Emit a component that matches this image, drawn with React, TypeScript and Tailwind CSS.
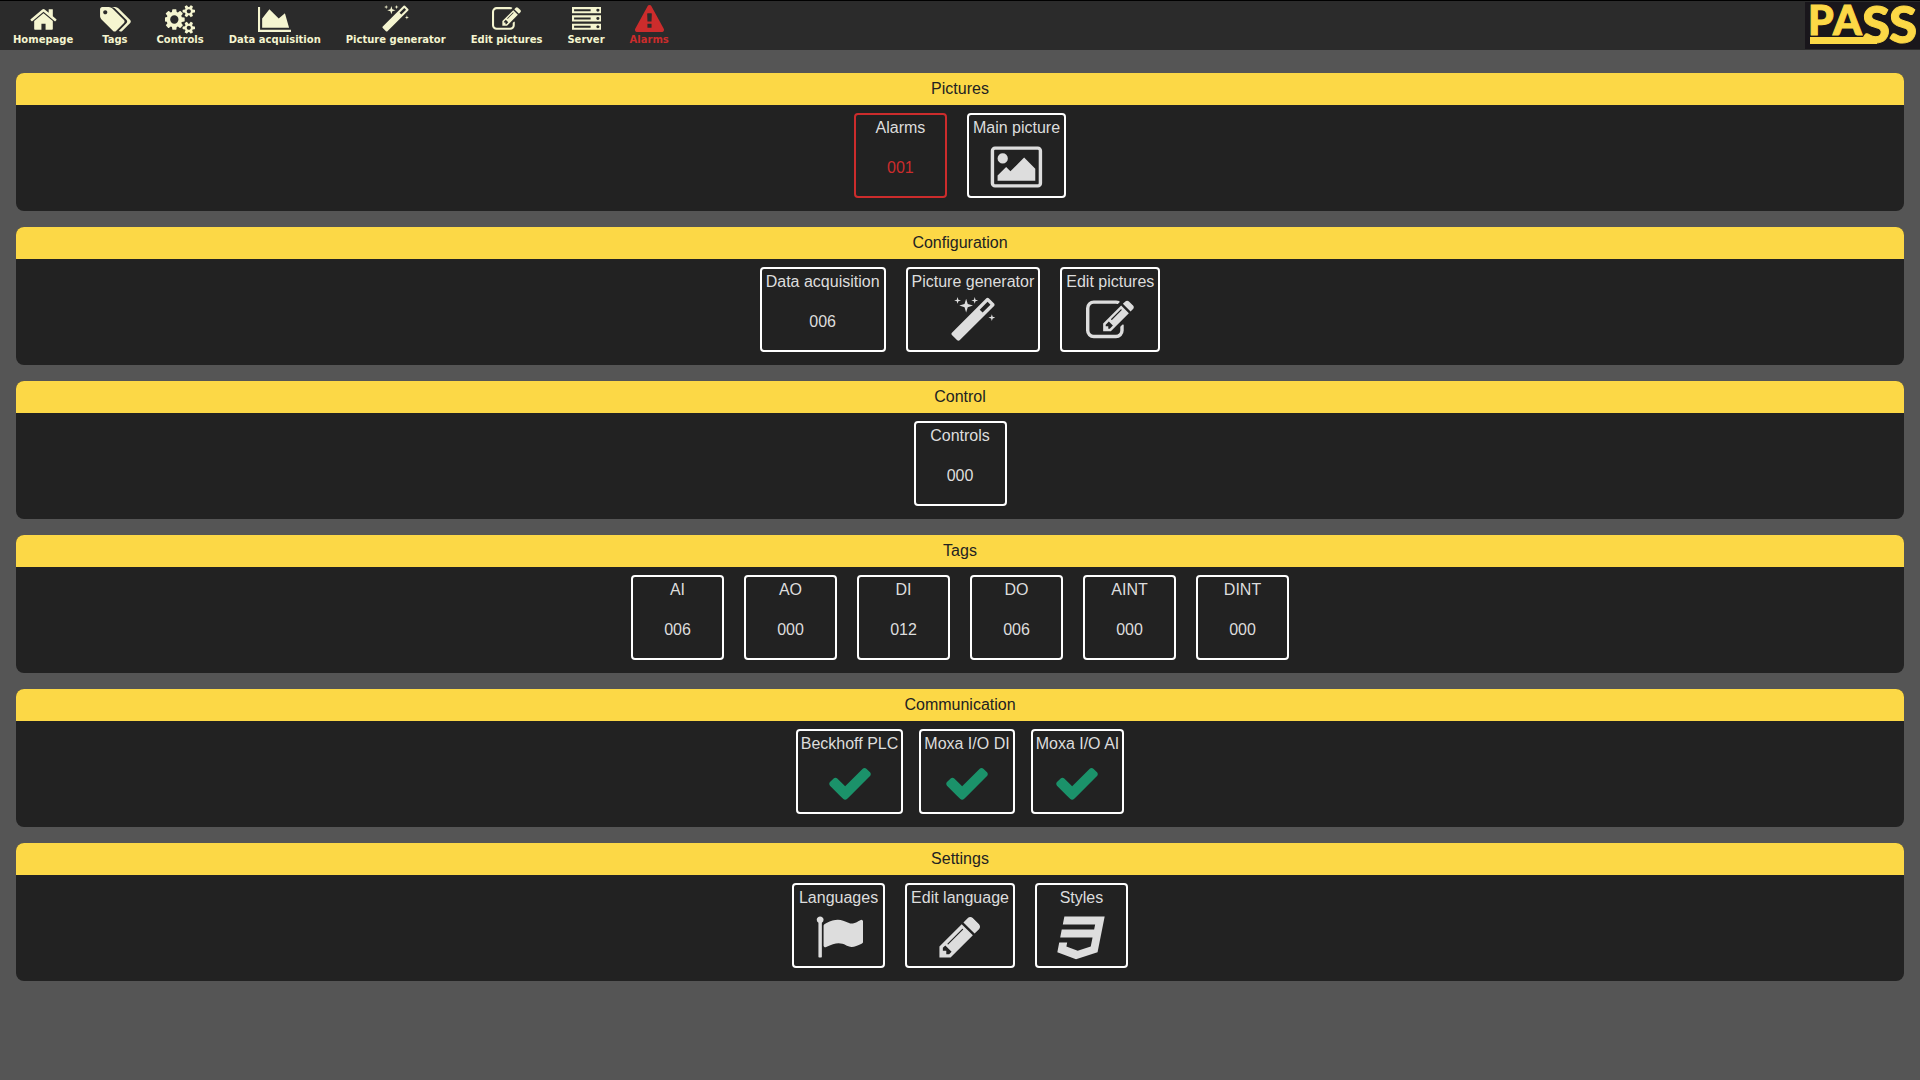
type Glyph = { width: number; d: string }

const glyphs: Record<string, Glyph> = {
  home: {
    width: 1792,
    d: 'M1472 992v480q0 26-19 45t-45 19h-384v-384h-256v384h-384q-26 0-45-19t-19-45v-480q0-1 .5-3t.5-3l575-474 575 474q1 2 1 6zm223-69l-62 74q-8 9-21 11h-3q-13 0-21-7l-692-577-692 577q-12 8-24 7-13-2-21-11l-62-74q-8-10-7-23.5t11-21.5l719-599q32-26 76-26t76 26l244 204v-195q0-14 9-23t23-9h192q14 0 23 9t9 23v408l219 182q10 8 11 21.5t-7 23.5z',
  },
  tags: {
    width: 2048,
    d: 'M576 448q0-53-37.5-90.5t-90.5-37.5-90.5 37.5-37.5 90.5 37.5 90.5 90.5 37.5 90.5-37.5 37.5-90.5zm1067 576q0 53-37 90l-491 492q-39 37-91 37-53 0-90-37l-715-716q-38-37-64.5-101t-26.5-117v-416q0-52 38-90t90-38h416q53 0 117 26.5t102 64.5l715 714q37 39 37 91zm384 0q0 53-37 90l-491 492q-39 37-91 37-36 0-59-14t-53-45l470-470q37-37 37-90 0-52-37-91l-715-714q-38-38-102-64.5t-117-26.5h224q53 0 117 26.5t102 64.5l715 714q37 39 37 91z',
  },
  cogs: {
    width: 1920,
    d: 'M832 896q0-106-75-181t-181-75-181 75-75 181 75 181 181 75 181-75 75-181zm768 512q0-52-38-90t-90-38-90 38-38 90q0 53 37.5 90.5t90.5 37.5 90.5-37.5 37.5-90.5zm0-1024q0-52-38-90t-90-38-90 38-38 90q0 53 37.5 90.5t90.5 37.5 90.5-37.5 37.5-90.5zm-384 421v185q0 10-7 19.5t-16 10.5l-155 24q-11 35-32 76 34 48 90 115 7 11 7 20 0 12-7 19-23 30-82.5 89.5t-78.5 59.5q-11 0-21-7l-115-90q-37 19-77 31-11 108-23 155-7 24-30 24h-186q-11 0-20-7.5t-10-17.5l-23-153q-34-10-75-31l-118 89q-7 7-20 7-11 0-21-8-144-133-144-160 0-9 7-19 10-14 41-53t47-61q-23-44-35-82l-152-24q-10-1-17-9.5t-7-19.5v-185q0-10 7-19.5t16-10.5l155-24q11-35 32-76-34-48-90-115-7-11-7-20 0-12 7-20 22-30 82-89t79-59q11 0 21 7l115 90q34-18 77-32 11-108 23-154 7-24 30-24h186q11 0 20 7.5t10 17.5l23 153q34 10 75 31l118-89q8-7 20-7 11 0 21 8 144 133 144 160 0 8-7 19-12 16-42 54t-45 60q23 48 34 82l152 23q10 2 17 10.5t7 19.5zm640 533v140q0 16-149 31-12 27-30 52 51 113 51 138 0 4-4 7-122 71-124 71-8 0-46-47t-52-68q-20 2-30 2t-30-2q-14 21-52 68t-46 47q-2 0-124-71-4-3-4-7 0-25 51-138-18-25-30-52-149-15-149-31v-140q0-16 149-31 13-29 30-52-51-113-51-138 0-4 4-7 4-2 35-20t59-34 30-16q8 0 46 46.5t52 67.5q20-2 30-2t30 2q51-71 92-112l6-2q4 0 124 70 4 3 4 7 0 25-51 138 17 23 30 52 149 15 149 31zm0-1024v140q0 16-149 31-12 27-30 52 51 113 51 138 0 4-4 7-122 71-124 71-8 0-46-47t-52-68q-20 2-30 2t-30-2q-14 21-52 68t-46 47q-2 0-124-71-4-3-4-7 0-25 51-138-18-25-30-52-149-15-149-31v-140q0-16 149-31 13-29 30-52-51-113-51-138 0-4 4-7 4-2 35-20t59-34 30-16q8 0 46 46.5t52 67.5q20-2 30-2t30 2q51-71 92-112l6-2q4 0 124 70 4 3 4 7 0 25-51 138 17 23 30 52 149 15 149 31z',
  },
  chart: {
    width: 2048,
    d: 'M2048 1536v128h-2048v-1536h128v1408h1920zm-384-1024l256 896h-1664v-576l448-576 576 576z',
  },
  magic: {
    width: 1792,
    d: 'M1254 581l293-293-107-107-293 293zm447-293q0 27-18 45l-1286 1286q-18 18-45 18t-45-18l-198-198q-18-18-18-45t18-45l1286-1286q18-18 45-18t45 18l198 198q18 18 18 45zm-1351-190l98 30-98 30-30 98-30-98-98-30 98-30 30-98zm350 162l196 60-196 60-60 196-60-196-196-60 196-60 60-196zm930 478l98 30-98 30-30 98-30-98-98-30 98-30 30-98zm-640-640l98 30-98 30-30 98-30-98-98-30 98-30 30-98z',
  },
  edit: {
    width: 1792,
    d: 'M888 1184l116-116-152-152-116 116v56h96v96h56zm440-720q-16-16-33 1l-350 350q-17 17-1 33t33-1l350-350q17-17 1-33zm80 594v190q0 119-84.5 203.5t-203.5 84.5h-832q-119 0-203.5-84.5t-84.5-203.5v-832q0-119 84.5-203.5t203.5-84.5h832q63 0 117 25 15 7 18 23 3 17-9 29l-49 49q-14 14-32 8-23-6-45-6h-832q-66 0-113 47t-47 113v832q0 66 47 113t113 47h832q66 0 113-47t47-113v-126q0-13 9-22l64-64q15-15 35-7t20 29zm-96-738l288 288-672 672h-288v-288zm444 132l-92 92-288-288 92-92q28-28 68-28t68 28l152 152q28 28 28 68t-28 68z',
  },
  server: {
    width: 1792,
    d: 'M128 1408h1024v-128h-1024v128zm0-512h1024v-128h-1024v128zm1568 448q0-40-28-68t-68-28-68 28-28 68 28 68 68 28 68-28 28-68zm-1568-960h1024v-128h-1024v128zm1568 448q0-40-28-68t-68-28-68 28-28 68 28 68 68 28 68-28 28-68zm0-512q0-40-28-68t-68-28-68 28-28 68 28 68 68 28 68-28 28-68zm96 832v384h-1792v-384h1792zm0-512v384h-1792v-384h1792zm0-512v384h-1792v-384h1792z',
  },
  warning: {
    width: 1792,
    d: 'M1024 1375v-190q0-14-9.5-23.5t-22.5-9.5h-192q-13 0-22.5 9.5t-9.5 23.5v190q0 14 9.5 23.5t22.5 9.5h192q13 0 22.5-9.5t9.5-23.5zm-2-374l18-459q0-12-10-19-13-11-24-11h-220q-11 0-24 11-10 7-10 21l17 457q0 10 10 16.5t24 6.5h185q14 0 23.5-6.5t10.5-16.5zm-14-934l768 1408q35 63-2 126-17 29-46.5 46t-63.5 17h-1536q-34 0-63.5-17t-46.5-46q-37-63-2-126l768-1408q17-31 47-49t65-18 65 18 47 49z',
  },
  picture: {
    width: 2048,
    d: 'M704 576q0 80-56 136t-136 56-136-56-56-136 56-136 136-56 136 56 56 136zm1024 384v448h-1408v-192l320-320 160 160 512-512zm96-704h-1600q-13 0-22.5 9.5t-9.5 22.5v1216q0 13 9.5 22.5t22.5 9.5h1600q13 0 22.5-9.5t9.5-22.5v-1216q0-13-9.5-22.5t-22.5-9.5zm160 32v1216q0 66-47 113t-113 47h-1600q-66 0-113-47t-47-113v-1216q0-66 47-113t113-47h1600q66 0 113 47t47 113z',
  },
  check: {
    width: 1792,
    d: 'M1671 566q0 40-28 68l-724 724-136 136q-28 28-68 28t-68-28l-136-136-362-362q-28-28-28-68t28-68l136-136q28-28 68-28t68 28l294 295 656-657q28-28 68-28t68 28l136 136q28 28 28 68z',
  },
  flag: {
    width: 1792,
    d: 'M320 256q0 72-64 110v1266q0 13-9.5 22.5t-22.5 9.5h-64q-13 0-22.5-9.5t-9.5-22.5v-1266q-64-38-64-110 0-53 37.5-90.5t90.5-37.5 90.5 37.5 37.5 90.5zm1472 64v763q0 25-12.5 38.5t-39.5 27.5q-215 116-369 116-61 0-123.5-22t-108.5-48-115.5-48-142.5-22q-192 0-464 146-17 9-33 9-26 0-45-19t-19-45v-742q0-32 31-55 21-14 79-43 236-120 421-120 107 0 200 29t219 88q38 19 88 19 54 0 117.5-21t110-47 88-47 54.5-21q26 0 45 19t19 45z',
  },
  pencil: {
    width: 1792,
    d: 'M491 1536l91-91-235-235-91 91v107h128v128h107zm523-928q0-22-22-22-10 0-17 7l-542 542q-7 7-7 17 0 22 22 22 10 0 17-7l542-542q7-7 7-17zm-54-192l416 416-832 832h-416v-416zm683 96q0 53-37 90l-166 166-416-416 166-165q36-38 90-38 53 0 91 38l235 234q37 39 37 91z',
  },
  css3: {
    width: 1792,
    d: 'M275 128h1505l-266 1333-804 267-698-267 71-356h297l-29 147 422 161 486-161 68-339h-1208l58-297h1209l38-191h-1208z',
  },
}

function Icon({ name, className }: { name: string; className: string }) {
  const glyph = glyphs[name]
  return (
    <svg viewBox={`0 0 ${glyph.width} 1792`} className={className} fill="currentColor" aria-hidden="true">
      <path d={glyph.d} />
    </svg>
  )
}

const navItems = [
  { label: 'Homepage', icon: 'home' },
  { label: 'Tags', icon: 'tags' },
  { label: 'Controls', icon: 'cogs' },
  { label: 'Data acquisition', icon: 'chart' },
  { label: 'Picture generator', icon: 'magic' },
  { label: 'Edit pictures', icon: 'edit' },
  { label: 'Server', icon: 'server' },
  { label: 'Alarms', icon: 'warning', alarm: true },
]

type Tile = { label: string; value?: string; icon?: string; alarm?: boolean; ok?: boolean }
type Group = { title: string; tight?: boolean; tiles: Tile[] }

const groups: Group[] = [
  {
    title: 'Pictures',
    tiles: [
      { label: 'Alarms', value: '001', alarm: true },
      { label: 'Main picture', icon: 'picture' },
    ],
  },
  {
    title: 'Configuration',
    tiles: [
      { label: 'Data acquisition', value: '006' },
      { label: 'Picture generator', icon: 'magic' },
      { label: 'Edit pictures', icon: 'edit' },
    ],
  },
  { title: 'Control', tiles: [{ label: 'Controls', value: '000' }] },
  {
    title: 'Tags',
    tiles: [
      { label: 'AI', value: '006' },
      { label: 'AO', value: '000' },
      { label: 'DI', value: '012' },
      { label: 'DO', value: '006' },
      { label: 'AINT', value: '000' },
      { label: 'DINT', value: '000' },
    ],
  },
  {
    title: 'Communication',
    tight: true,
    tiles: [
      { label: 'Beckhoff PLC', icon: 'check', ok: true },
      { label: 'Moxa I/O DI', icon: 'check', ok: true },
      { label: 'Moxa I/O AI', icon: 'check', ok: true },
    ],
  },
  {
    title: 'Settings',
    tiles: [
      { label: 'Languages', icon: 'flag' },
      { label: 'Edit language', icon: 'pencil' },
      { label: 'Styles', icon: 'css3' },
    ],
  },
]

function Logo() {
  return (
    <a href="#pass" aria-label="PASS" className="my-px block bg-[#19161b]">
      <svg viewBox="0 0 115 47" className="h-[47px] w-[115px] overflow-visible" fill="#fcd846">
        <g fontFamily="Lato, sans-serif" fontWeight="900" stroke="#fcd846">
          <text x="3" y="33" fontSize="41">P</text>
          <text x="28" y="33" fontSize="41">A</text>
          <text x="57" y="41" fontSize="51">S</text>
          <text x="84" y="41" fontSize="51">S</text>
        </g>
        <rect x="5" y="35" width="67" height="7" />
      </svg>
    </a>
  )
}

function TileLink({ tile, tight }: { tile: Tile; tight?: boolean }) {
  const border = tile.alarm ? 'border-[#cc2c2c]' : 'border-white'
  const accent = tile.alarm ? 'text-[#cc2c2c]' : tile.ok ? 'text-[#1b926a]' : 'text-[#dddddd]'
  return (
    <a
      href={`#${tile.label}`}
      className={`flex min-w-[93px] flex-col items-center gap-[3px] rounded border-2 pt-px pb-[5px] text-[#dddddd] ${tight ? 'px-[3px]' : 'px-1'} ${border}`}
    >
      <span className="leading-6">{tile.label}</span>
      <span className={`flex h-12 items-center ${accent}`}>
        {tile.icon ? <Icon name={tile.icon} className="h-12 w-auto" /> : <span className="pt-0.5">{tile.value}</span>}
      </span>
    </a>
  )
}

export default function App() {
  return (
    <div className="min-h-screen bg-[#555555] font-['Liberation_Sans',Arial,sans-serif] text-base">
      <header className="flex items-start justify-between border-t border-black bg-[#2b2b2b]">
        <nav className="flex gap-[25px] pt-1 pb-1 pl-[13px] font-['DejaVu_Sans',Verdana,sans-serif] text-[10px] leading-3 font-bold">
          {navItems.map((item) => (
            <a
              key={item.label}
              href={`#${item.label}`}
              className={`flex flex-col items-center ${item.alarm ? 'text-[#cc2c2c]' : 'text-[#f5f5d0]'}`}
            >
              <Icon name={item.icon} className="h-[29px] w-auto" />
              <span>{item.label}</span>
            </a>
          ))}
        </nav>
        <Logo />
      </header>

      <main className="flex flex-col gap-4 px-4 pt-[23px] pb-4">
        {groups.map((group) => (
          <section key={group.title} className="overflow-hidden rounded-lg bg-[#222222]" aria-label={group.title}>
            <h2 className="bg-[#fcd846] text-center leading-8 text-[#222222]">{group.title}</h2>
            <div className={`flex justify-center pt-2 pb-[13px] ${group.tight ? 'gap-4' : 'gap-5'}`}>
              {group.tiles.map((tile) => (
                <TileLink key={tile.label} tile={tile} tight={group.tight} />
              ))}
            </div>
          </section>
        ))}
      </main>
    </div>
  )
}
